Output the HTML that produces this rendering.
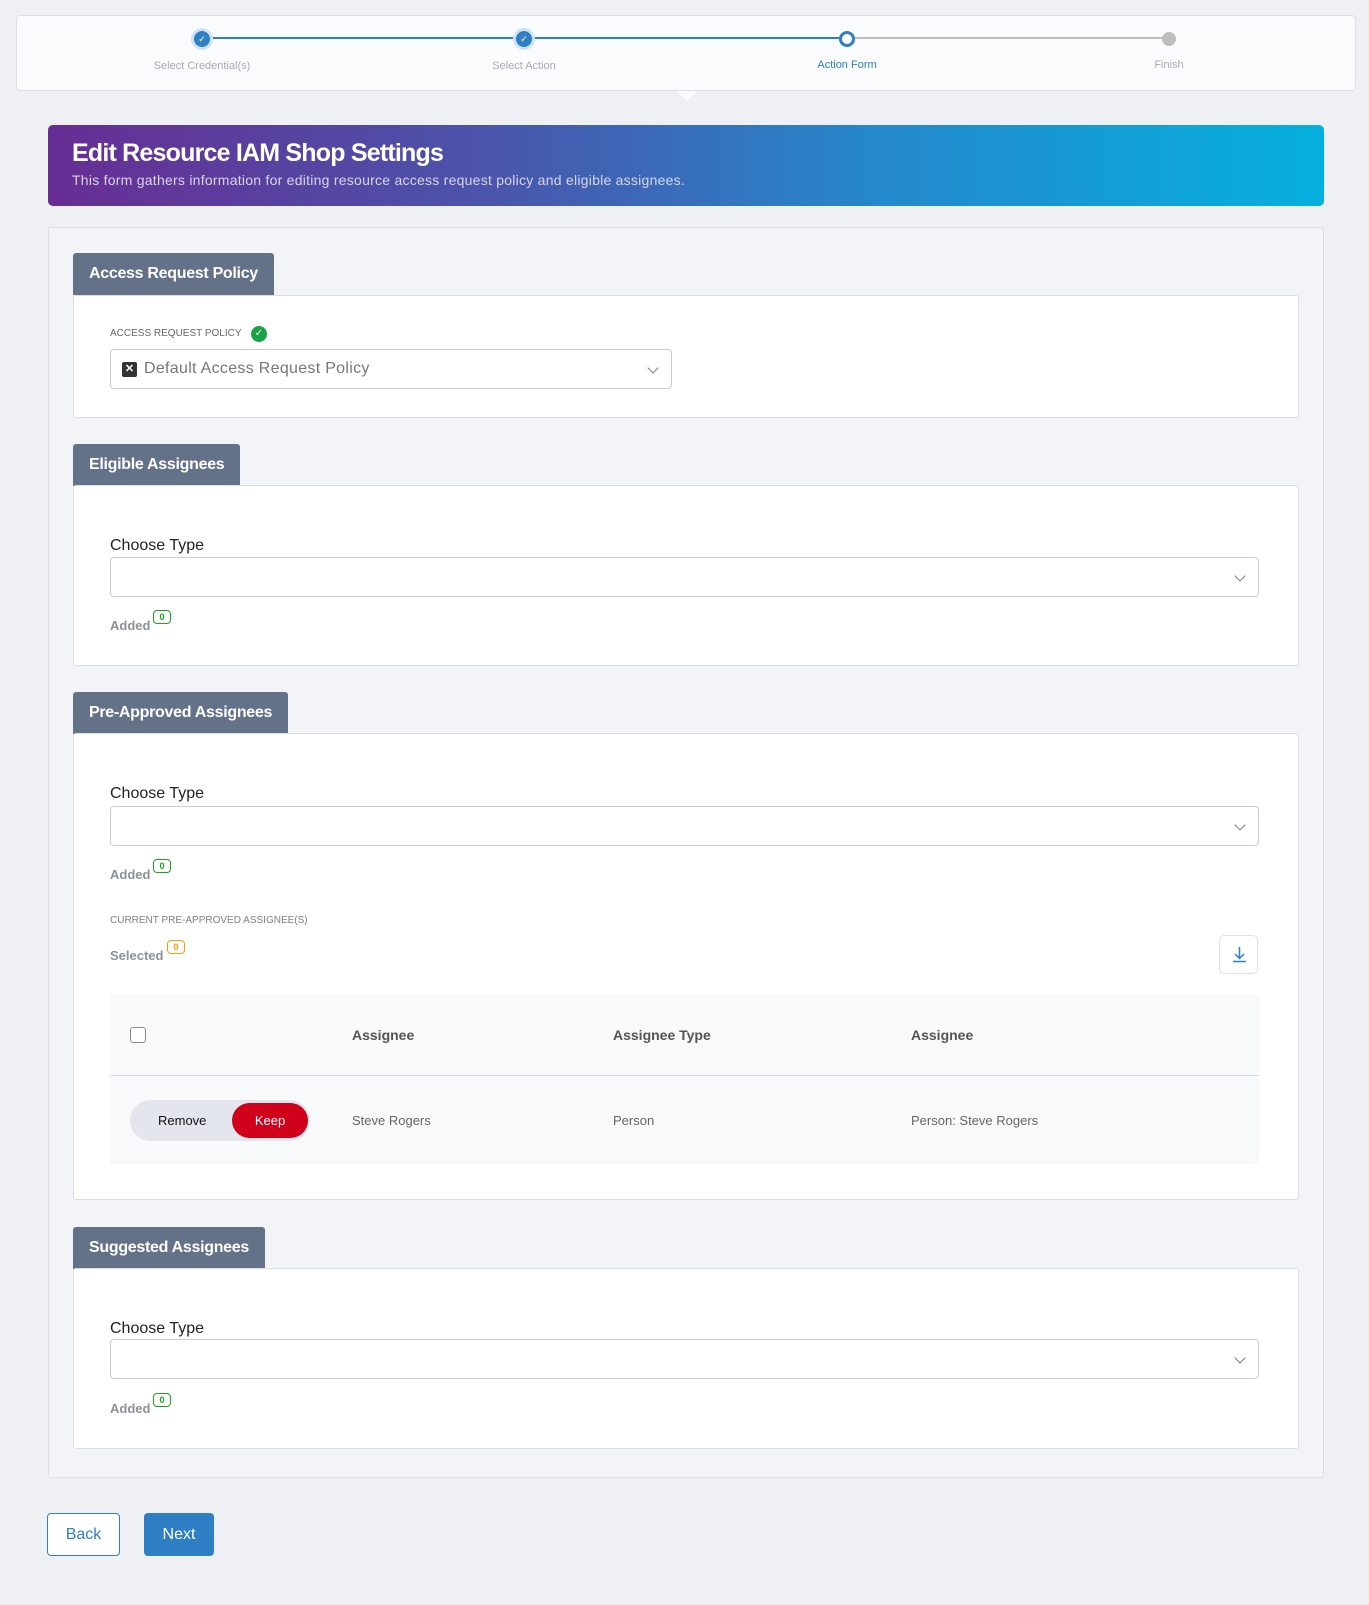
<!DOCTYPE html>
<html><head><meta charset="utf-8"><style>
*{box-sizing:border-box;margin:0;padding:0}
body{width:1369px;height:1605px;background:#eef0f4;font-family:"Liberation Sans",sans-serif;position:relative;overflow:hidden}
.a{position:absolute}
.step{position:absolute;top:15px;left:16px;width:1340px;height:76px;background:#fafbfc;border:1px solid #dcdee6;border-radius:4px}
.lab{position:absolute;top:59px;font-size:11px;color:#a8abb2;transform:translateX(-50%);white-space:nowrap}
.dot{position:absolute;width:18px;height:18px;border-radius:50%;top:30px;transform:translateX(-50%)}
.tab{position:absolute;left:73px;height:42px;background:#637289;color:#fff;font-weight:bold;font-size:16px;padding:12px 16px;border-radius:3px 3px 0 0;letter-spacing:-0.3px}
.sec{position:absolute;left:73px;width:1226px;background:#fff;border:1px solid #dcdee6;border-radius:3px}
.ct{position:absolute;left:110px;font-size:16px;color:#222}
.sel{position:absolute;left:110px;width:1149px;height:40px;border:1px solid #ccc;border-radius:4px;background:#fff}
.chev{position:absolute;right:14px;top:14px;width:8px;height:8px;border-right:1.5px solid #777;border-bottom:1.5px solid #777;transform:rotate(45deg)}
.added{position:absolute;left:110px;font-size:13px;font-weight:bold;color:#8d9097}
.bdg{position:absolute;font-size:9px;font-weight:bold;border:1px solid;border-radius:4px;width:18px;height:14px;text-align:center;line-height:12px}
.th{position:absolute;top:1027px;font-size:14px;font-weight:bold;color:#555}
.td{position:absolute;top:1113px;font-size:13px;color:#666}
</style></head><body>
<div class="step"></div>
<div class="a" style="left:202px;top:37px;width:645px;height:2px;background:#2f7fc4"></div>
<div class="a" style="left:847px;top:37px;width:322px;height:2px;background:#bdbdbd"></div>
<div class="dot" style="left:202px;background:#cfe2f3;width:22px;height:22px;top:28px"></div>
<div class="dot" style="left:202px;background:#2f7fc4;top:31px;width:16px;height:16px;color:#fff;font-size:9px;text-align:center;line-height:16px">✓</div>
<div class="dot" style="left:524px;background:#cfe2f3;width:22px;height:22px;top:28px"></div>
<div class="dot" style="left:524px;background:#2f7fc4;top:31px;width:16px;height:16px;color:#fff;font-size:9px;text-align:center;line-height:16px">✓</div>
<div class="dot" style="left:847px;background:#fff;border:3px solid #2f7fc4;width:16px;height:16px;top:31px"></div>
<div class="dot" style="left:1169px;background:#bdbdbd;width:14px;height:14px;top:32px"></div>
<div class="lab" style="left:202px;top:60px">Select Credential(s)</div>
<div class="lab" style="left:524px;top:60px">Select Action</div>
<div class="lab" style="left:847px;color:#2f7fc4">Action Form</div>
<div class="lab" style="left:1169px">Finish</div>
<div class="a" style="left:677px;top:91px;width:0;height:0;border-left:10px solid transparent;border-right:10px solid transparent;border-top:10px solid #fafbfc"></div>

<div class="a" style="left:48px;top:125px;width:1276px;height:81px;border-radius:5px;background:linear-gradient(90deg,#672d93 0%,#4a55ab 35%,#2588cb 65%,#05b0df 100%)"></div>
<div class="a" style="left:72px;top:139px;font-size:25px;font-weight:bold;color:#fff;letter-spacing:-0.8px">Edit Resource IAM Shop Settings</div>
<div class="a" style="left:72px;top:172px;font-size:14px;color:#d8d4ee;letter-spacing:0.25px">This form gathers information for editing resource access request policy and eligible assignees.</div>

<div class="a" style="left:48px;top:227px;width:1276px;height:1251px;background:#f3f4f7;border:1px solid #dcdee6;border-radius:3px"></div>

<div class="tab" style="top:253px">Access Request Policy</div>
<div class="sec" style="top:295px;height:123px"></div>
<div class="a" style="left:110px;top:328px;font-size:10px;color:#666">ACCESS REQUEST POLICY</div>
<div class="a" style="left:251px;top:326px;width:16px;height:16px;border-radius:50%;background:#18a344;color:#fff;font-size:10px;text-align:center;line-height:16px">✓</div>
<div class="a" style="left:110px;top:349px;width:562px;height:40px;border:1px solid #ccc;border-radius:4px;background:#fff"><div class="a" style="left:11px;top:12px;width:15px;height:15px;background:#333;border-radius:2px;color:#fff;font-size:11px;text-align:center;line-height:15px;font-weight:bold">✕</div><div class="a" style="left:33px;top:10px;font-size:16px;color:#777;letter-spacing:0.3px">Default Access Request Policy</div><div class="chev"></div></div>

<div class="tab" style="top:444px">Eligible Assignees</div>
<div class="sec" style="top:485px;height:181px"></div>
<div class="ct" style="top:537px">Choose Type</div>
<div class="sel" style="top:557px"><div class="chev"></div></div>
<div class="added" style="top:618px">Added</div>
<div class="bdg" style="left:153px;top:610px;color:#20a020;border-color:#20a020">0</div>

<div class="tab" style="top:692px">Pre-Approved Assignees</div>
<div class="sec" style="top:733px;height:467px"></div>
<div class="ct" style="top:785px">Choose Type</div>
<div class="sel" style="top:806px"><div class="chev"></div></div>
<div class="added" style="top:867px">Added</div>
<div class="bdg" style="left:153px;top:859px;color:#20a020;border-color:#20a020">0</div>
<div class="a" style="left:110px;top:915px;font-size:10px;color:#7a8190">CURRENT PRE-APPROVED ASSIGNEE(S)</div>
<div class="added" style="top:948px">Selected</div>
<div class="bdg" style="left:167px;top:940px;color:#f5a000;border-color:#f5a000">0</div>
<div class="a" style="left:1219px;top:935px;width:39px;height:39px;border:1px solid #dde1e8;border-radius:5px;background:#fff">
<svg width="39" height="39" viewBox="0 0 39 39"><path d="M19.5 11v11M15 18l4.5 4.5L24 18M13 25.5h13" stroke="#2f7fc4" stroke-width="1.5" fill="none"/></svg></div>
<div class="a" style="left:110px;top:995px;width:1149px;height:169px;background:#f8f9fb"></div>
<div class="a" style="left:110px;top:1075px;width:1149px;height:1px;background:#d8dae0"></div>
<div class="a" style="left:130px;top:1027px;width:16px;height:16px;border:1px solid #888;border-radius:3px;background:#fff"></div>
<div class="th" style="left:352px">Assignee</div>
<div class="th" style="left:613px">Assignee Type</div>
<div class="th" style="left:911px">Assignee</div>
<div class="a" style="left:130px;top:1100px;width:180px;height:41px;border-radius:21px;background:#e4e6ee"></div>
<div class="a" style="left:158px;top:1113px;font-size:13px;color:#111">Remove</div>
<div class="a" style="left:232px;top:1103px;width:76px;height:35px;border-radius:18px;background:#d0021b;color:#fff;font-size:13px;text-align:center;line-height:35px">Keep</div>
<div class="td" style="left:352px">Steve Rogers</div>
<div class="td" style="left:613px">Person</div>
<div class="td" style="left:911px">Person: Steve Rogers</div>

<div class="tab" style="top:1227px">Suggested Assignees</div>
<div class="sec" style="top:1268px;height:181px"></div>
<div class="ct" style="top:1320px">Choose Type</div>
<div class="sel" style="top:1339px"><div class="chev"></div></div>
<div class="added" style="top:1401px">Added</div>
<div class="bdg" style="left:153px;top:1393px;color:#20a020;border-color:#20a020">0</div>

<div class="a" style="left:47px;top:1513px;width:73px;height:43px;border:1px solid #2f7fc4;border-radius:4px;background:#fff;color:#2f7fc4;font-size:16px;text-align:center;line-height:41px">Back</div>
<div class="a" style="left:144px;top:1513px;width:70px;height:43px;border-radius:4px;background:#2f7fc4;color:#fff;font-size:16px;text-align:center;line-height:43px">Next</div>
</body></html>
